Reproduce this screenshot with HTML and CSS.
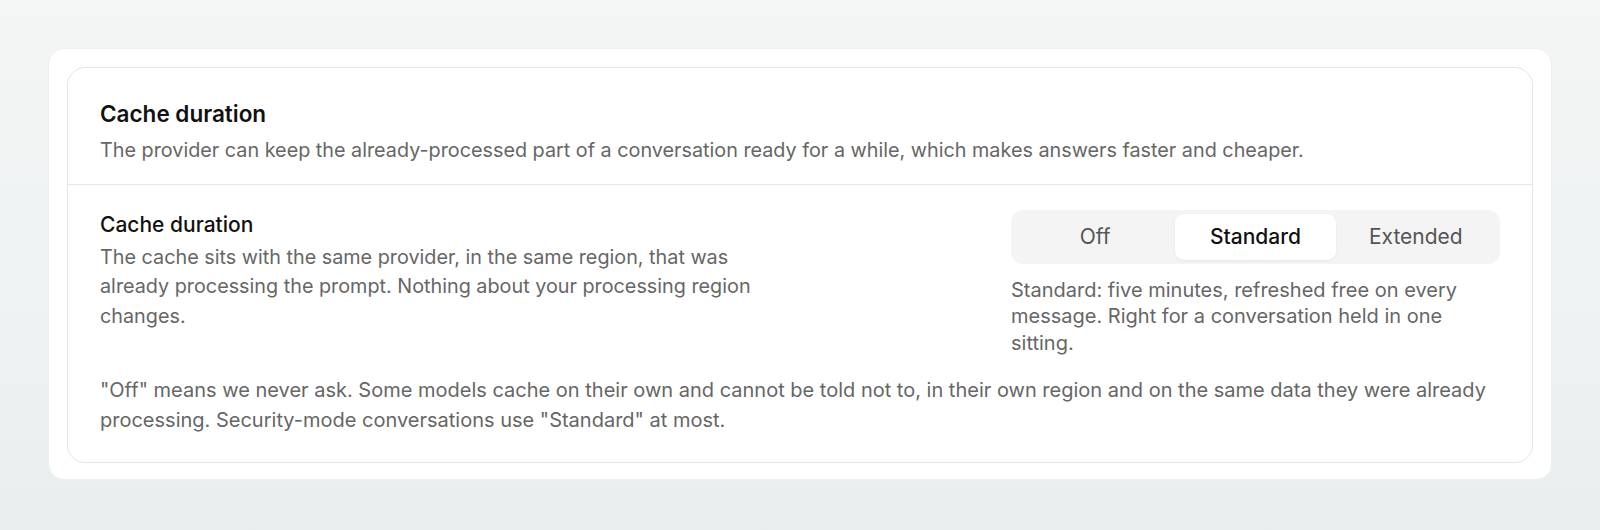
FILE: index.html
```html
<!DOCTYPE html>
<html lang="en">
<head>
<meta charset="utf-8">
<title>Cache duration</title>
<link rel="stylesheet" href="styles.css">
</head>
<body>
  <main class="page">
    <div class="shell">
      <section class="card">
        <header class="card-head">
          <h2 class="card-title">Cache duration</h2>
          <p class="card-desc">The provider can keep the already-processed part of a conversation ready for a while, which makes answers faster and cheaper.</p>
        </header>
        <div class="card-body">
          <div class="setting-row">
            <div class="setting-text">
              <h3 class="setting-label">Cache duration</h3>
              <p class="setting-desc">The cache sits with the same provider, in the same region, that was already processing the prompt. Nothing about your processing region changes.</p>
            </div>
            <div class="setting-control">
              <div class="segmented" role="radiogroup">
                <button class="seg" type="button">Off</button>
                <button class="seg seg-active" type="button">Standard</button>
                <button class="seg" type="button">Extended</button>
              </div>
              <p class="seg-hint">Standard: five minutes, refreshed free on every message. Right for a conversation held in one sitting.</p>
            </div>
          </div>
          <p class="note">"Off" means we never ask. Some models cache on their own and cannot be told not to, in their own region and on the same data they were already processing. Security-mode conversations use "Standard" at most.</p>
        </div>
      </section>
    </div>
  </main>
</body>
</html>
```

FILE: styles.css
```css
* { box-sizing: border-box; }

html, body {
  margin: 0;
  padding: 0;
}

body {
  min-height: 530px;
  font-family: Inter, "Noto Sans", "Liberation Sans", sans-serif;
  background: linear-gradient(180deg, #f4f5f5 0%, #eef2f2 60%, #e8eeee 100%);
  color: #111;
}

.page {
  padding: 48px;
}

.shell {
  background: #ffffff;
  border: 1px solid #eef0f0;
  border-radius: 16px;
  padding: 18px 18px 16px;
}

.card {
  border: 1px solid #e4e4e4;
  border-radius: 18px;
  background: #fff;
}

.card-head {
  padding: 31px 32px 18px;
  border-bottom: 1px solid #e6e6e6;
}

.card-title {
  margin: 0;
  font-size: 22.5px;
  line-height: 30px;
  font-weight: 600;
  color: #111;
}

.card-desc {
  margin: 7px 0 0;
  font-size: 19.8px;
  line-height: 29.6px;
  color: #666;
}

.card-body {
  padding: 25px 32px 26px;
}

.setting-row {
  display: flex;
  justify-content: space-between;
  align-items: flex-start;
  gap: 48px;
}

.setting-text {
  max-width: 680px;
}

.setting-label {
  margin: 0;
  font-size: 21px;
  line-height: 29px;
  font-weight: 500;
  color: #111;
}

.setting-desc {
  margin: 4px 0 0;
  font-size: 19.8px;
  line-height: 29.6px;
  color: #666;
}

.setting-control {
  flex: 0 0 489px;
}

.segmented {
  display: grid;
  grid-template-columns: repeat(3, 1fr);
  padding: 4px;
  background: #f4f4f4;
  border-radius: 12px;
}

.seg {
  height: 46px;
  border: 0;
  background: transparent;
  border-radius: 9px;
  font-family: inherit;
  font-size: 21px;
  font-weight: 400;
  color: #555;
  cursor: pointer;
}

.seg-active {
  background: #fff;
  color: #111;
  font-weight: 500;
  box-shadow: 0 1px 3px rgba(0, 0, 0, 0.06);
}

.seg-hint {
  margin: 13px 0 0;
  max-width: 480px;
  font-size: 20px;
  line-height: 26.6px;
  color: #666;
}

.note {
  margin: 20px 0 0;
  font-size: 20px;
  line-height: 29.6px;
  color: #666;
}
```
